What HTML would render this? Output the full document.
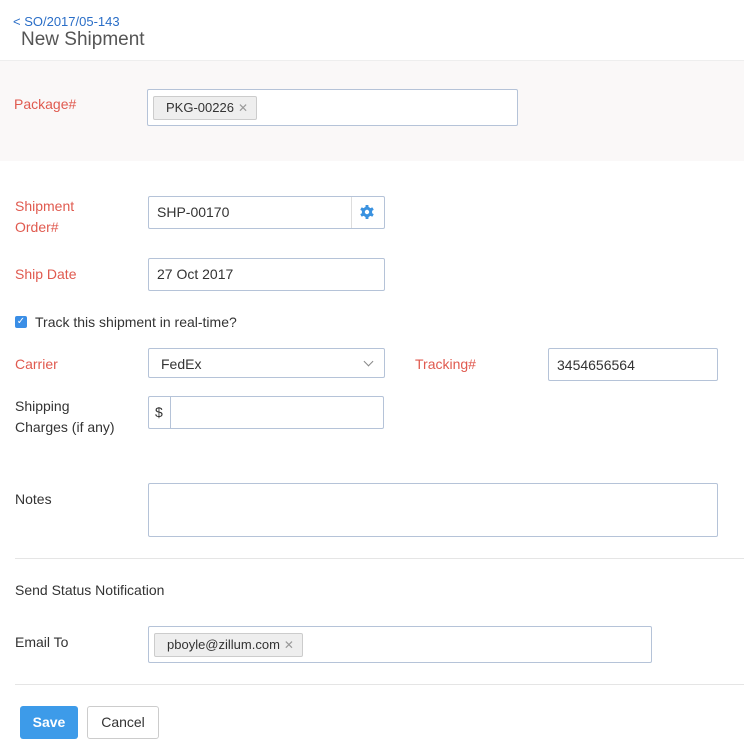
<!DOCTYPE html>
<html><head><style>
*{box-sizing:border-box;margin:0;padding:0}
body{width:744px;height:754px;background:#fff;font-family:"Liberation Sans",sans-serif;font-size:14px;color:#333;position:relative;overflow:hidden}
.a{position:absolute}
.red{color:#e05a4f}
.in{position:absolute;border:1px solid #b5c3d8;border-radius:2px;background:#fff}
.tag{position:absolute;background:#eee;border:1px solid #ccc;border-radius:2px;font-size:13px;padding:0 0 0 12px;line-height:22px;color:#333}
.tag span{color:#999;margin:0 8px 0 4px;font-size:12px}
</style></head><body>
<div class="a" style="left:13px;top:14px;font-size:13px;color:#2a6ec7">&lt; SO/2017/05-143</div>
<div class="a" style="left:21px;top:29px;font-size:19px;color:#555">New Shipment</div>
<div class="a" style="left:0;top:60px;width:744px;height:101px;background:#faf8f8;border-top:1px solid #eee"></div>
<div class="a red" style="left:14px;top:96px">Package#</div>
<div class="in" style="left:147px;top:89px;width:371px;height:37px"></div>
<div class="tag" style="left:153px;top:96px">PKG-00226<span>✕</span></div>
<div class="a red" style="left:15px;top:196px;line-height:21px">Shipment<br>Order#</div>
<div class="in" style="left:148px;top:196px;width:237px;height:33px"></div>
<div class="a" style="left:351px;top:197px;width:1px;height:31px;background:#ddd"></div>
<div class="a" style="left:157px;top:204px">SHP-00170</div>
<svg class="a" style="left:359px;top:204px" width="16" height="16" viewBox="0 0 16 16"><g fill="#3a92e0"><circle cx="8" cy="8" r="5.2"/><rect x="6.5" y="1" width="3" height="14" rx="0.6"/><rect x="6.5" y="1" width="3" height="14" rx="0.6" transform="rotate(60 8 8)"/><rect x="6.5" y="1" width="3" height="14" rx="0.6" transform="rotate(120 8 8)"/></g><circle cx="8" cy="8" r="2.2" fill="#fff"/></svg>
<div class="a red" style="left:15px;top:266px">Ship Date</div>
<div class="in" style="left:148px;top:258px;width:237px;height:33px"></div>
<div class="a" style="left:157px;top:266px">27 Oct 2017</div>
<div class="a" style="left:15px;top:316px;width:12px;height:12px;background:#3a8ee6;border-radius:2px;color:#fff;font-size:10px;line-height:12px;text-align:center">✓</div>
<div class="a" style="left:35px;top:314px">Track this shipment in real-time?</div>
<div class="a red" style="left:15px;top:356px">Carrier</div>
<div class="in" style="left:148px;top:348px;width:237px;height:30px"></div>
<div class="a" style="left:161px;top:356px">FedEx</div>
<div class="a" style="left:365px;top:358px;width:7px;height:7px;border-right:1.5px solid #888;border-bottom:1.5px solid #888;transform:rotate(45deg)"></div>
<div class="a red" style="left:415px;top:356px">Tracking#</div>
<div class="in" style="left:548px;top:348px;width:170px;height:33px"></div>
<div class="a" style="left:557px;top:357px">3454656564</div>
<div class="a" style="left:15px;top:396px;line-height:21px">Shipping<br>Charges (if any)</div>
<div class="in" style="left:148px;top:396px;width:236px;height:33px"></div>
<div class="a" style="left:170px;top:397px;width:1px;height:31px;background:#b5c3d8"></div>
<div class="a" style="left:155px;top:404px">$</div>
<div class="a" style="left:15px;top:491px">Notes</div>
<div class="in" style="left:148px;top:483px;width:570px;height:54px"></div>
<div class="a" style="left:15px;top:558px;width:729px;height:1px;background:#e5e5e5"></div>
<div class="a" style="left:15px;top:582px">Send Status Notification</div>
<div class="a" style="left:15px;top:634px">Email To</div>
<div class="in" style="left:148px;top:626px;width:504px;height:37px"></div>
<div class="tag" style="left:154px;top:633px">pboyle@zillum.com<span>✕</span></div>
<div class="a" style="left:15px;top:684px;width:729px;height:1px;background:#e5e5e5"></div>
<div class="a" style="left:20px;top:706px;width:58px;height:33px;background:#3d9be9;border-radius:3px;color:#fff;font-weight:bold;text-align:center;line-height:33px">Save</div>
<div class="a" style="left:87px;top:706px;width:72px;height:33px;border:1px solid #ccc;border-radius:3px;text-align:center;line-height:31px">Cancel</div>
</body></html>
